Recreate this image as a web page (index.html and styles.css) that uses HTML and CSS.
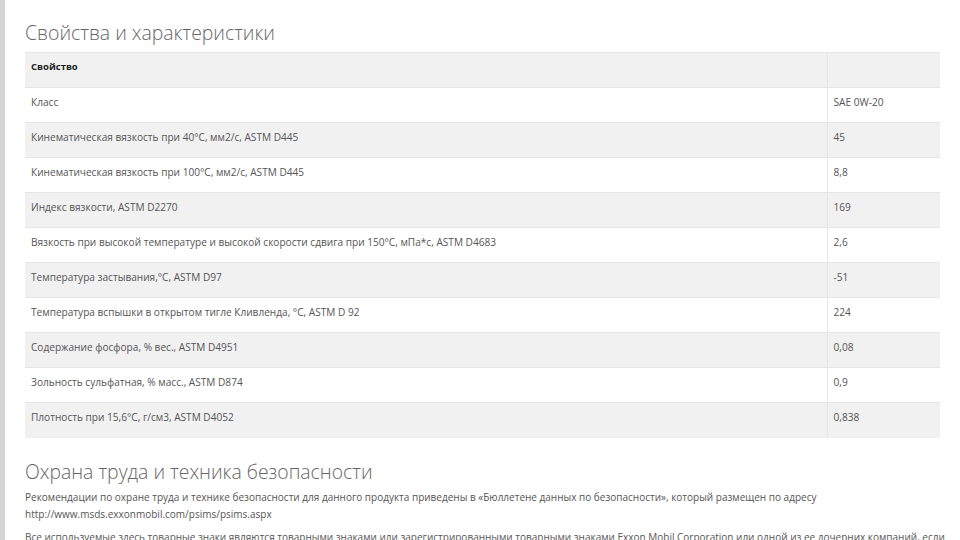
FILE: index.html
```html
<!DOCTYPE html>
<html>

<head>
    <meta charset="utf-8">
    <meta name="viewport" content="width=device-width">
    <title>Свойства и характеристики</title>
    <link rel="stylesheet" href="styles.css">
</head>

<body>
    <div class="page">
        <div class="content">
            <h2 class="title">Свойства и характеристики</h2>
            <table class="props">
                <tr class="head">
                    <th>Свойство</th>
                    <th></th>
                </tr>
                <tr>
                    <td>Класс</td>
                    <td>SAE 0W-20</td>
                </tr>
                <tr>
                    <td>Кинематическая вязкость при 40°C, мм2/с, ASTM D445</td>
                    <td>45</td>
                </tr>
                <tr>
                    <td>Кинематическая вязкость при 100°C, мм2/с, ASTM D445</td>
                    <td>8,8</td>
                </tr>
                <tr>
                    <td>Индекс вязкости, ASTM D2270</td>
                    <td>169</td>
                </tr>
                <tr>
                    <td>Вязкость при высокой температуре и высокой скорости сдвига при 150°C, мПа*с, ASTM D4683</td>
                    <td>2,6</td>
                </tr>
                <tr>
                    <td>Температура застывания,°C, ASTM D97</td>
                    <td>-51</td>
                </tr>
                <tr>
                    <td>Температура вспышки в открытом тигле Кливленда, °C, ASTM D 92</td>
                    <td>224</td>
                </tr>
                <tr>
                    <td>Содержание фосфора, % вес., ASTM D4951</td>
                    <td>0,08</td>
                </tr>
                <tr>
                    <td>Зольность сульфатная, % масс., ASTM D874</td>
                    <td>0,9</td>
                </tr>
                <tr>
                    <td>Плотность при 15,6°C, г/см3, ASTM D4052</td>
                    <td>0,838</td>
                </tr>
            </table>

            <h2 class="title second">Охрана труда и техника безопасности</h2>
            <p class="text">Рекомендации по охране труда и технике безопасности для данного продукта приведены в «Бюллетене данных по безопасности», который размещен по адресу<br>http://www.msds.exxonmobil.com/psims/psims.aspx</p>
            <p class="text">Все используемые здесь товарные знаки являются товарными знаками или зарегистрированными товарными знаками Exxon Mobil Corporation или одной из ее дочерних компаний, если не указано иное.</p>
        </div>
    </div>
</body>

</html>
```

FILE: styles.css
```css
html,
body {
    margin: 0;
    padding: 0;
    background: #fff;
}

body {
    font-family: "Open Sans", "Noto Sans", sans-serif;
    color: #555;
    overflow: hidden;
}

.page {
    border-left: 5px solid #d4d4d4;
    min-height: 540px;
}

.content {
    padding: 18px 20px 0 20px;
}

.title {
    margin: 0 0 4px 0;
    font-size: 19.4px;
    font-weight: 300;
    line-height: 30px;
    color: #666;
}

.title.second {
    margin-top: 19px;
    margin-bottom: 2px;
}

.props {
    width: 915px;
    border-collapse: collapse;
    font-size: 10.1px;
}

.props td,
.props th {
    height: 35px;
    box-sizing: border-box;
    padding: 0 6px 6px 6px;
    border-top: 1px solid #e6e6e6;
    text-align: left;
    vertical-align: middle;
    line-height: 16px;
}

.props td:last-child,
.props th:last-child {
    width: 113px;
    border-left: 1px solid #e6e6e6;
}

.props tr:nth-child(odd) {
    background: #f1f1f1;
}

.props .head {
    background: #f1f1f1;
}

.props th {
    font-weight: 700;
    color: #222;
    font-size: 9.5px;
}

.text {
    margin: 0 -10px 6px 0;
    font-size: 10px;
    line-height: 17px;
    color: #555;
}
```
